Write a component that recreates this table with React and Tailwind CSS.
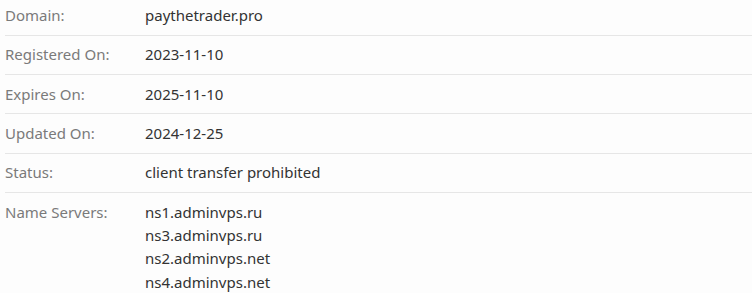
export default function App() {
  const rows = [
    ["Domain:", ["paythetrader.pro"]],
    ["Registered On:", ["2023-11-10"]],
    ["Expires On:", ["2025-11-10"]],
    ["Updated On:", ["2024-12-25"]],
    ["Status:", ["client transfer prohibited"]],
    ["Name Servers:", ["ns1.adminvps.ru", "ns3.adminvps.ru", "ns2.adminvps.net", "ns4.adminvps.net"]],
  ];
  return (
    <div className="w-[752px] h-[293px] overflow-hidden bg-[#fdfdfd] pl-[5px] text-[15px] leading-[23.33px]" style={{ fontFamily: '"Noto Sans", sans-serif' }}>
      <div className="-mt-[3.5px]">
        {rows.map(([label, vals], i) => (
          <div key={label} className={`flex py-[7.5px] ${i < rows.length - 1 ? "border-b border-[#e6e6e6]" : ""}`}>
            <div className="w-[140px] shrink-0 text-[#7a7a7a]">{label}</div>
            <div className="text-[#333333]">
              {vals.map((v) => (
                <div key={v}>{v}</div>
              ))}
            </div>
          </div>
        ))}
      </div>
    </div>
  );
}
